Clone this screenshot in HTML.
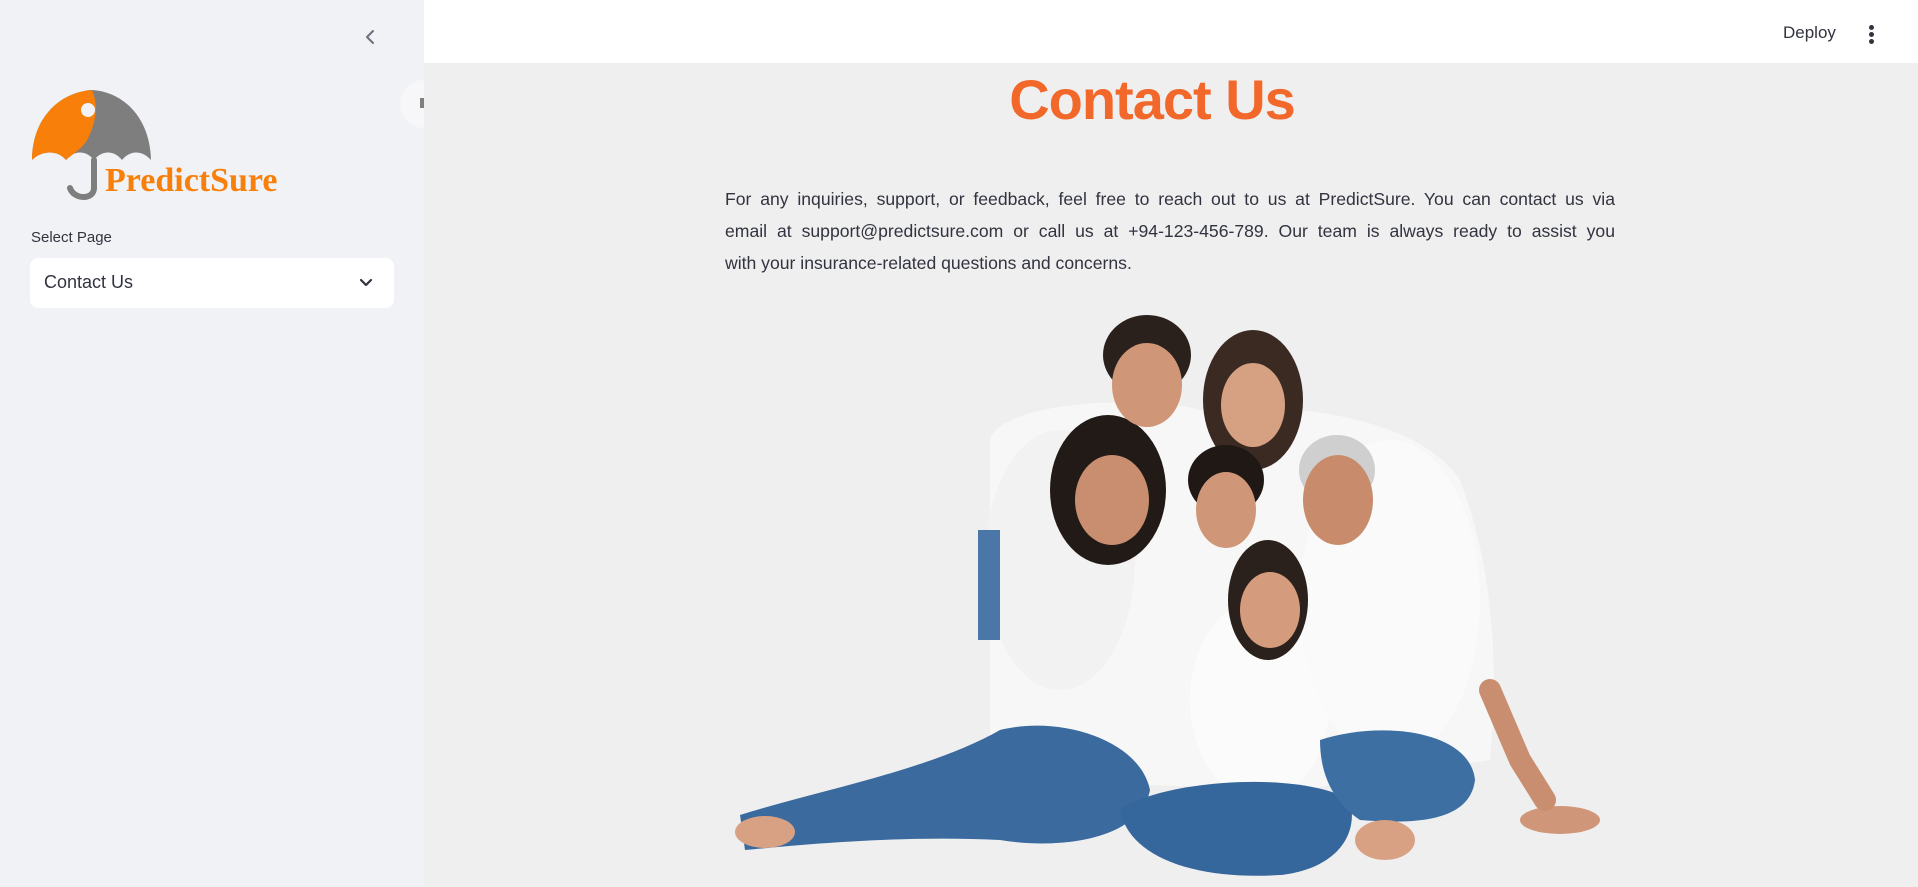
<!DOCTYPE html>
<html><head><meta charset="utf-8"><style>
*{margin:0;padding:0;box-sizing:border-box}
body{width:1918px;height:887px;overflow:hidden;background:#efefef;font-family:"Liberation Sans",sans-serif;position:relative}
#side{position:absolute;left:0;top:0;width:424px;height:887px;background:#f0f2f6}
#hdr{position:absolute;left:424px;top:0;right:0;height:63px;background:#fff}
.abs{position:absolute}
.ln{width:890px;text-align:justify;text-align-last:justify;white-space:nowrap;height:32px}
</style></head><body>
<div id="side">
 <svg class="abs" style="left:362px;top:28px" width="18" height="18" viewBox="0 0 18 18"><path d="M11 3 L5 9 L11 15" fill="none" stroke="#6b6f7b" stroke-width="2" stroke-linecap="round" stroke-linejoin="round"/></svg>
 <svg class="abs" style="left:30px;top:88px" width="125" height="115" viewBox="0 0 125 115">
  <path d="M2 72 C2 30 30 4 62 2 C94 4 120 30 121 72 C112 62 100 62 92 72 C84 62 72 62 64 72 C56 62 44 62 36 72 C28 62 12 62 2 72Z" fill="#7d7e7d"/>
  <path d="M2 72 C2 30 30 4 62 2 C70 20 64 40 56 54 C48 64 40 68 36 72 C28 62 12 62 2 72Z" fill="#f77f0a"/>
  <circle cx="58" cy="22" r="7" fill="#f0f2f6"/>
  <path d="M64 72 L64 100 C64 112 44 112 40 100" fill="none" stroke="#7d7e7d" stroke-width="6" stroke-linecap="round"/>
 </svg>
 <div class="abs" style="left:105px;top:162px;font-family:'Liberation Serif',serif;font-weight:bold;font-size:34px;color:#f77f0a">PredictSure</div>
 <div class="abs" style="left:31px;top:229px;font-size:15px;color:#31333f">Select Page</div>
 <div class="abs" style="left:30px;top:258px;width:364px;height:50px;background:#fff;border-radius:8px"></div>
 <div class="abs" style="left:44px;top:272px;font-size:18px;color:#31333f">Contact Us</div>
 <svg class="abs" style="left:358px;top:275px" width="16" height="16" viewBox="0 0 16 16"><path d="M3 5 L8 10 L13 5" fill="none" stroke="#31333f" stroke-width="2.2" stroke-linecap="round" stroke-linejoin="round"/></svg>
 <div class="abs" style="left:400px;top:80px;width:24px;height:48px;overflow:hidden">
  <div style="width:48px;height:48px;border-radius:50%;background:#f7f7f9"></div>
  <div class="abs" style="left:20px;top:18px;width:4px;height:10px;background:#808080"></div>
 </div>
</div>
<div id="hdr"></div>
<div class="abs" style="left:1783px;top:23px;font-size:17px;color:#31333f">Deploy</div>
<div class="abs" style="left:1869px;top:25px;width:5px">
 <div style="width:5px;height:5px;border-radius:50%;background:#31333f;margin-bottom:2px"></div>
 <div style="width:5px;height:5px;border-radius:50%;background:#31333f;margin-bottom:2px"></div>
 <div style="width:5px;height:5px;border-radius:50%;background:#31333f"></div>
</div>
<div class="abs" style="left:424px;top:67px;width:1456px;text-align:center;font-family:'Liberation Sans',sans-serif;font-size:56px;font-weight:bold;color:#f2672a;letter-spacing:-1px">Contact Us</div>
<div class="abs" style="left:725px;top:183px;font-size:17.6px;line-height:32px;color:#31333f">
 <div class="ln">For any inquiries, support, or feedback, feel free to reach out to us at PredictSure. You can contact us via</div>
 <div class="ln">email at support@predictsure.com or call us at +94-123-456-789. Our team is always ready to assist you</div>
 <div style="white-space:nowrap">with your insurance-related questions and concerns.</div>
</div>
<svg class="abs" style="left:0;top:0" width="1918" height="887" viewBox="0 0 1918 887">
 <path d="M990 440 C1000 400 1150 395 1200 410 C1300 400 1420 420 1460 480 C1490 560 1500 650 1490 760 L1300 790 L990 780 Z" fill="#f7f7f7"/>
 <ellipse cx="1060" cy="560" rx="75" ry="130" fill="#f2f2f2"/>
 <ellipse cx="1260" cy="700" rx="70" ry="100" fill="#fbfbfb"/>
 <ellipse cx="1390" cy="600" rx="90" ry="160" fill="#fafafa"/>
 <path d="M740 815 C820 790 930 770 1000 730 C1060 715 1140 740 1150 790 C1140 840 1060 850 1000 840 C900 835 800 845 745 850 Z" fill="#3a6a9e"/>
 <path d="M1120 810 C1160 780 1300 770 1350 800 C1360 840 1330 870 1280 875 C1200 880 1130 860 1120 810Z" fill="#35669c"/>
 <path d="M1320 740 C1380 720 1470 730 1475 780 C1470 820 1420 825 1360 820 C1330 800 1320 770 1320 740Z" fill="#3d6fa3"/>
 <path d="M978 530 L1000 530 L1000 640 L978 640 Z" fill="#4a77a8"/>
 <ellipse cx="765" cy="832" rx="30" ry="16" fill="#d9a183"/>
 <ellipse cx="1385" cy="840" rx="30" ry="20" fill="#d9a183"/>
 <ellipse cx="1560" cy="820" rx="40" ry="14" fill="#cf967a"/>
 <path d="M1490 690 L1520 760 L1545 800" stroke="#c98e6f" stroke-width="22" fill="none" stroke-linecap="round"/>
 <ellipse cx="1147" cy="355" rx="44" ry="40" fill="#2a201c"/>
 <ellipse cx="1253" cy="400" rx="50" ry="70" fill="#3a2a22"/>
 <ellipse cx="1108" cy="490" rx="58" ry="75" fill="#221a17"/>
 <ellipse cx="1226" cy="480" rx="38" ry="35" fill="#1f1815"/>
 <ellipse cx="1268" cy="600" rx="40" ry="60" fill="#2a201c"/>
 <ellipse cx="1337" cy="470" rx="38" ry="35" fill="#cfcfcf"/>
 <ellipse cx="1147" cy="385" rx="35" ry="42" fill="#cf9778"/>
 <ellipse cx="1253" cy="405" rx="32" ry="42" fill="#d6a083"/>
 <ellipse cx="1112" cy="500" rx="37" ry="45" fill="#c98e6f"/>
 <ellipse cx="1226" cy="510" rx="30" ry="38" fill="#cf9778"/>
 <ellipse cx="1338" cy="500" rx="35" ry="45" fill="#c88c6c"/>
 <ellipse cx="1270" cy="610" rx="30" ry="38" fill="#d49b7c"/>
</svg>
</body></html>
